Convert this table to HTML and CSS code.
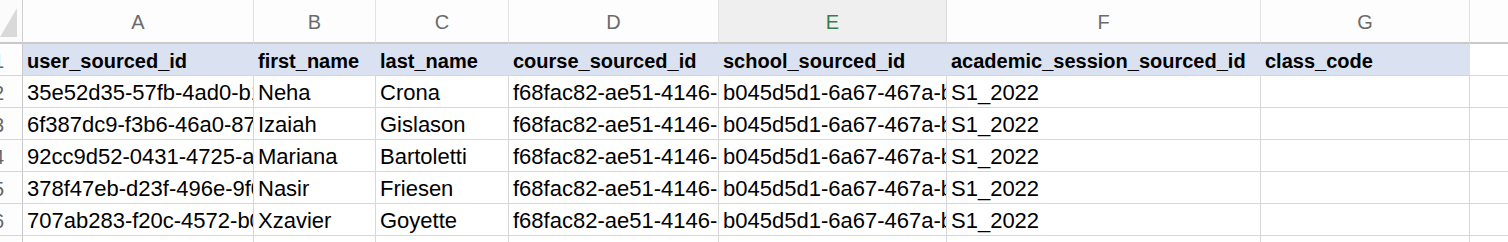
FILE: index.html
```html
<!DOCTYPE html>
<html>
<head>
<meta charset="utf-8">
<link rel="stylesheet" href="styles.css">
</head>
<body>
<div class="sheet">
  <div class="corner"><svg class="corner-tri" width="23" height="42" viewBox="0 0 23 42"><polygon points="0,37 17,37 17,8" fill="#d9d9d9"/></svg></div>
  <div class="colhead">A</div>
  <div class="colhead">B</div>
  <div class="colhead">C</div>
  <div class="colhead">D</div>
  <div class="colhead sel">E</div>
  <div class="colhead">F</div>
  <div class="colhead">G</div>
  <div class="colhead last"></div>

  <div class="rowhead"><span>1</span></div>
  <div class="cell hd">user_sourced_id</div>
  <div class="cell hd">first_name</div>
  <div class="cell hd">last_name</div>
  <div class="cell hd">course_sourced_id</div>
  <div class="cell hd">school_sourced_id</div>
  <div class="cell hd">academic_session_sourced_id</div>
  <div class="cell hd">class_code</div>
  <div class="cell last"></div>

  <div class="rowhead"><span>2</span></div>
  <div class="cell">35e52d35-57fb-4ad0-b1c2-3e4f5a6b7c8d</div>
  <div class="cell">Neha</div>
  <div class="cell">Crona</div>
  <div class="cell">f68fac82-ae51-4146-9a2b-7c3d1e0f5a44</div>
  <div class="cell">b045d5d1-6a67-467a-b8c9-0d1e2f3a4b5c</div>
  <div class="cell">S1_2022</div>
  <div class="cell"></div>
  <div class="cell last"></div>

  <div class="rowhead"><span>3</span></div>
  <div class="cell">6f387dc9-f3b6-46a0-87d1-2a3b4c5d6e7f</div>
  <div class="cell">Izaiah</div>
  <div class="cell">Gislason</div>
  <div class="cell">f68fac82-ae51-4146-9a2b-7c3d1e0f5a44</div>
  <div class="cell">b045d5d1-6a67-467a-b8c9-0d1e2f3a4b5c</div>
  <div class="cell">S1_2022</div>
  <div class="cell"></div>
  <div class="cell last"></div>

  <div class="rowhead"><span>4</span></div>
  <div class="cell">92cc9d52-0431-4725-a6e2-8b9c0d1e2f3a</div>
  <div class="cell">Mariana</div>
  <div class="cell">Bartoletti</div>
  <div class="cell">f68fac82-ae51-4146-9a2b-7c3d1e0f5a44</div>
  <div class="cell">b045d5d1-6a67-467a-b8c9-0d1e2f3a4b5c</div>
  <div class="cell">S1_2022</div>
  <div class="cell"></div>
  <div class="cell last"></div>

  <div class="rowhead"><span>5</span></div>
  <div class="cell">378f47eb-d23f-496e-9f01-4c5d6e7f8a9b</div>
  <div class="cell">Nasir</div>
  <div class="cell">Friesen</div>
  <div class="cell">f68fac82-ae51-4146-9a2b-7c3d1e0f5a44</div>
  <div class="cell">b045d5d1-6a67-467a-b8c9-0d1e2f3a4b5c</div>
  <div class="cell">S1_2022</div>
  <div class="cell"></div>
  <div class="cell last"></div>

  <div class="rowhead"><span>6</span></div>
  <div class="cell">707ab283-f20c-4572-b0a1-5d6e7f8a9b0c</div>
  <div class="cell">Xzavier</div>
  <div class="cell">Goyette</div>
  <div class="cell">f68fac82-ae51-4146-9a2b-7c3d1e0f5a44</div>
  <div class="cell">b045d5d1-6a67-467a-b8c9-0d1e2f3a4b5c</div>
  <div class="cell">S1_2022</div>
  <div class="cell"></div>
  <div class="cell last"></div>

  <div class="rowhead"><span>7</span></div>
  <div class="cell"></div>
  <div class="cell"></div>
  <div class="cell"></div>
  <div class="cell"></div>
  <div class="cell"></div>
  <div class="cell"></div>
  <div class="cell"></div>
  <div class="cell last"></div>
</div>
</body>
</html>
```

FILE: styles.css
```css
html, body {
  margin: 0;
  padding: 0;
  background: #ffffff;
  overflow: hidden;
}

.sheet {
  display: grid;
  grid-template-columns: 23px 231px 122px 133px 210px 228px 314px 209px 1fr;
  grid-template-rows: 44px repeat(6, 32px) 32px;
  width: 1508px;
  font-family: "Liberation Sans", Arial, sans-serif;
  color: #000;
}

.corner {
  box-sizing: border-box;
  border-right: 1px solid #d0d0d0;
  border-bottom: 2px solid #c9c9c9;
  background: #fbfbfb;
  overflow: hidden;
}

.corner-tri {
  display: block;
}

.colhead {
  box-sizing: border-box;
  border-right: 1px solid #e2e2e2;
  border-bottom: 2px solid #c9c9c9;
  background: #fdfdfd;
  color: #6b6b6b;
  font-size: 20px;
  display: flex;
  align-items: center;
  justify-content: center;
  padding-top: 2px;
}

.colhead.sel {
  background: #efefef;
  color: #3b7a50;
  border-right-color: #dadada;
}

.colhead.last {
  border-right: none;
}

.rowhead {
  box-sizing: border-box;
  border-right: 1px solid #c9c9c9;
  border-bottom: 1px solid #d6d6d6;
  background: #fdfdfd;
  color: #666;
  font-size: 20px;
  line-height: 24px;
  overflow: hidden;
  display: flex;
  align-items: flex-end;
  padding-bottom: 2px;
}

.rowhead span {
  margin-left: -7px;
}

.cell {
  box-sizing: border-box;
  border-right: 1px solid #d6d6d6;
  border-bottom: 1px solid #d6d6d6;
  font-size: 22px;
  line-height: 24px;
  white-space: nowrap;
  overflow: hidden;
  display: flex;
  align-items: flex-end;
  padding: 0 0 2px 4px;
}

.cell.hd {
  background: #dae2f1;
  border-right-color: #dae2f1;
  font-weight: bold;
  font-size: 20px;
}

.cell.last {
  border-right: none;
}
```
